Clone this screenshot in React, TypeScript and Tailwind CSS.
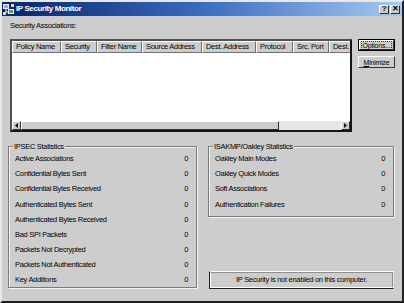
import React from "react";

const font = "font-['Liberation_Sans',Arial,sans-serif]";

const columns = [
  { name: "Policy Name", w: 49 },
  { name: "Security", w: 36 },
  { name: "Filter Name", w: 45 },
  { name: "Source Address", w: 60 },
  { name: "Dest. Address", w: 54 },
  { name: "Protocol", w: 37 },
  { name: "Src. Port", w: 36 },
  { name: "Dest. Port", w: 50 },
];

const ipsec = [
  "Active Associations",
  "Confidential Bytes Sent",
  "Confidential Bytes Received",
  "Authenticated Bytes Sent",
  "Authenticated Bytes Received",
  "Bad SPI Packets",
  "Packets Not Decrypted",
  "Packets Not Authenticated",
  "Key Additions",
];

const isakmp = [
  "Oakley Main Modes",
  "Oakley Quick Modes",
  "Soft Associations",
  "Authentication Failures",
];

const AppIcon = () => (
  <svg width="11" height="11" viewBox="0 0 11 11">
    <rect x="0.5" y="0.5" width="5" height="4" fill="#7fb0e0" stroke="#e8f0ff" strokeWidth="1" />
    <rect x="5.5" y="5.5" width="5" height="4" fill="#5ea05e" stroke="#e8f0ff" strokeWidth="1" />
    <path d="M3 5 V8 H5" stroke="#ffffff" strokeWidth="1" fill="none" />
    <rect x="0" y="8" width="3" height="3" fill="#d8d8d8" />
    <rect x="8" y="0" width="3" height="3" fill="#d8d8d8" />
  </svg>
);

const TitleButton = ({ label }: { label: string }) => (
  <div className="w-[10px] h-[9px] bg-[#cdcdcd] border border-t-white border-l-white border-r-[#303030] border-b-[#303030] flex items-center justify-center text-[8px] leading-none font-bold text-black">
    {label}
  </div>
);

const PushButton = ({
  children,
  isDefault,
}: {
  children: React.ReactNode;
  isDefault?: boolean;
}) => (
  <div
    className={`w-[37px] h-[12px] bg-[#cdcdcd] flex items-center justify-center ${
      isDefault ? "border border-black" : ""
    }`}
  >
    <div className="w-full h-full border border-t-white border-l-white border-r-[#303030] border-b-[#303030] flex items-center justify-center">
      <span
        className={`text-[7px] leading-none tracking-[-0.2px] text-black px-[1px] ${
          isDefault ? "outline outline-1 outline-dotted outline-[#333]" : ""
        }`}
      >
        {children}
      </span>
    </div>
  </div>
);

const StatRow = ({ label }: { label: string }) => (
  <div className="h-[15.2px] flex items-center justify-between pl-[6px] pr-[8px]">
    <span>{label}</span>
    <span>0</span>
  </div>
);

const Group = ({
  title,
  rows,
  className,
}: {
  title: string;
  rows: string[];
  className: string;
}) => (
  <div
    className={`relative border border-[#7a7a7a] shadow-[inset_1px_1px_0_#f4f4f4,1px_1px_0_#f4f4f4] pt-[4px] ${className}`}
  >
    <span className="absolute left-[4px] top-[-5px] bg-[#cdcdcd] px-[1px] leading-[9px]">
      {title}
    </span>
    {rows.map((r) => (
      <StatRow key={r} label={r} />
    ))}
  </div>
);

export default function App() {
  return (
    <div
      className={`${font} w-[404px] h-[303px] bg-[#cdcdcd] border-2 border-t-[#e8e8e8] border-l-[#e8e8e8] border-r-[#202020] border-b-[#202020] flex flex-col text-[7.5px] tracking-[-0.3px] text-black overflow-hidden`}
    >
      <div className="h-[14px] bg-gradient-to-r from-[#0a246a] via-[#3a6cc0] to-[#a6caf0] flex items-center justify-between pl-[1px] pr-[2px]">
        <div className="flex items-center gap-[2px]">
          <AppIcon />
          <span className="text-white font-bold text-[8px] tracking-[-0.4px]">
            IP Security Monitor
          </span>
        </div>
        <div className="flex gap-[1px]">
          <TitleButton label="?" />
          <TitleButton label="✕" />
        </div>
      </div>

      <div className="flex flex-col pl-[6px] pt-[5px]">
        <div className="ml-[2px] h-[9px] leading-[9px]">Security Associations:</div>

        <div className="ml-[2px] mt-[9px] flex gap-[6px]">
          <div className="w-[342px] h-[93px] bg-white border-2 border-t-[#505050] border-l-[#505050] border-b-[#151515] border-r-[#151515] flex flex-col overflow-hidden">
            <div className="flex h-[12px] shrink-0">
              {columns.map((c) => (
                <div
                  key={c.name}
                  style={{ width: c.w }}
                  className="shrink-0 bg-[#cdcdcd] border border-t-white border-l-white border-r-[#707070] border-b-[#707070] flex items-center pl-[3px] whitespace-nowrap overflow-hidden"
                >
                  {c.name}
                </div>
              ))}
            </div>
            <div className="flex-1" />
            <div className="h-[9px] flex shrink-0 bg-[#e6e6e6]">
              <div className="w-[9px] bg-[#cdcdcd] border border-t-white border-l-white border-r-[#303030] border-b-[#303030] flex items-center justify-center">
                <svg width="3" height="5" viewBox="0 0 3 5">
                  <path d="M3 0 L0 2.5 L3 5 Z" fill="#000" />
                </svg>
              </div>
              <div className="w-[258px] bg-[#cdcdcd] border border-t-white border-l-white border-r-[#303030] border-b-[#303030]" />
              <div className="flex-1" />
              <div className="w-[9px] bg-[#cdcdcd] border border-t-white border-l-white border-r-[#303030] border-b-[#303030] flex items-center justify-center">
                <svg width="3" height="5" viewBox="0 0 3 5">
                  <path d="M0 0 L3 2.5 L0 5 Z" fill="#000" />
                </svg>
              </div>
            </div>
          </div>

          <div className="flex flex-col gap-[5px]">
            <PushButton isDefault>
              <span className="underline">O</span>ptions...
            </PushButton>
            <PushButton>
              <span className="underline">M</span>inimize
            </PushButton>
          </div>
        </div>

        <div className="mt-[14px] flex gap-[11px]">
          <Group title="IPSEC Statistics" rows={ipsec} className="w-[189px] h-[142px]" />
          <div className="w-[186px] h-[143px] flex flex-col justify-between">
            <Group title="ISAKMP/Oakley Statistics" rows={isakmp} className="w-[186px] h-[71px]" />
            <div className="h-[18px] border border-t-white border-l-[#202020] border-b-[#202020] border-r-[#e8e8e8] ml-[1px]">
              <div className="h-full border border-t-[#909090] border-l-white border-r-[#909090] border-b-white flex items-center justify-center">
                IP Security is not enabled on this computer.
              </div>
            </div>
          </div>
        </div>
      </div>
    </div>
  );
}
